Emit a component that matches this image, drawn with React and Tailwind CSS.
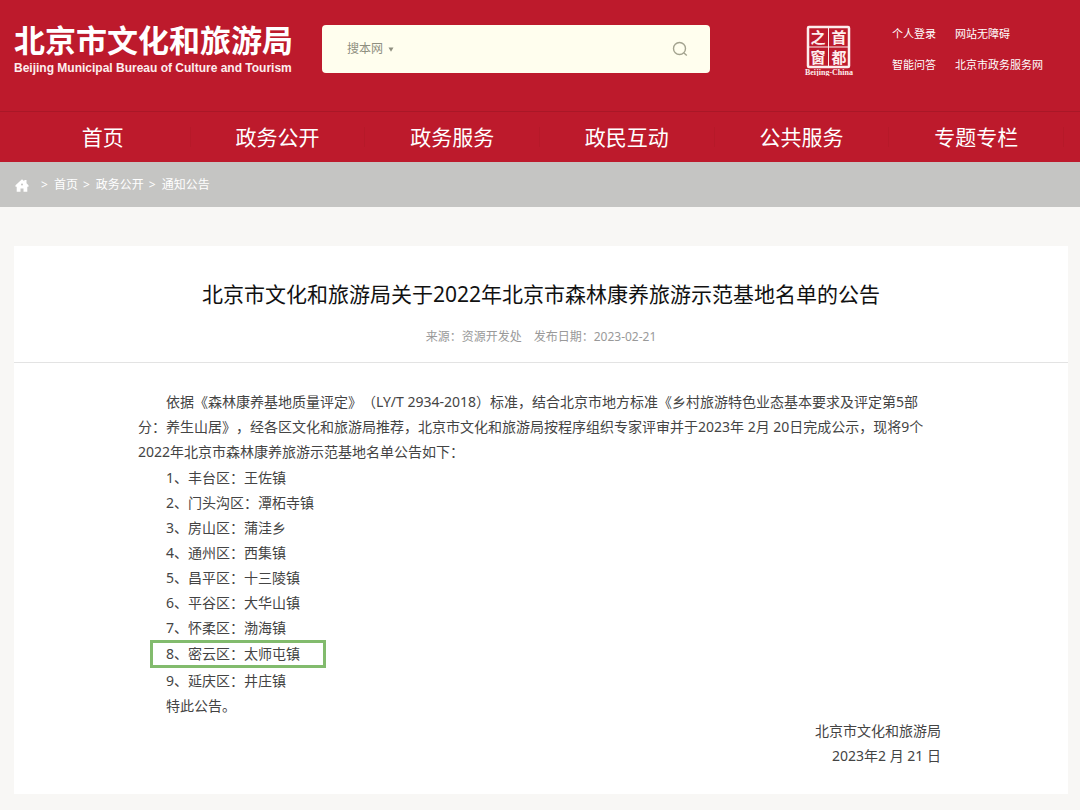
import React from 'react';

const navItems = ['首页', '政务公开', '政务服务', '政民互动', '公共服务', '专题专栏'];

const quickLinks = ['个人登录', '网站无障碍', '智能问答', '北京市政务服务网'];

const crumbs = ['首页', '政务公开', '通知公告'];

const bases = [
  { area: '丰台区', town: '王佐镇' },
  { area: '门头沟区', town: '潭柘寺镇' },
  { area: '房山区', town: '蒲洼乡' },
  { area: '通州区', town: '西集镇' },
  { area: '昌平区', town: '十三陵镇' },
  { area: '平谷区', town: '大华山镇' },
  { area: '怀柔区', town: '渤海镇' },
  { area: '密云区', town: '太师屯镇', marked: true },
  { area: '延庆区', town: '井庄镇' },
];

function CapitalWindow() {
  return (
    <a href="#" aria-label="首都之窗" className="block shrink-0">
      <svg width="50" height="52" viewBox="0 0 50 52" fill="#fdeeee">
        <rect x="4" y="3" width="41" height="40" rx="1" fill="none" stroke="#fdeeee" strokeWidth="2.5" />
        <path d="M24.5 3v40M4 23h41" stroke="#fdeeee" strokeWidth="1" />
        <g fontFamily="'Noto Sans CJK SC', sans-serif" fontWeight="700" fontSize="15" textAnchor="middle">
          <text x="14" y="19">之</text>
          <text x="35" y="19">首</text>
          <text x="14" y="39">窗</text>
          <text x="35" y="39">都</text>
        </g>
        <text x="25" y="51" textAnchor="middle" fontFamily="'Liberation Serif', serif" fontWeight="700" fontSize="8">Beijing-China</text>
      </svg>
    </a>
  );
}

function SearchBox() {
  return (
    <form className="mt-px flex h-12 w-[388px] items-center rounded bg-[#fffeee] pl-[25px] pr-5 text-[#8f8f80]" onSubmit={(e) => e.preventDefault()}>
      <div className="relative flex shrink-0 items-center">
        <select aria-label="搜索范围" className="appearance-none bg-transparent pr-4 text-xs outline-none">
          <option>搜本网</option>
        </select>
        <svg className="pointer-events-none absolute right-1.5" width="6" height="5" viewBox="0 0 6 5">
          <path d="M0.5 0.5h5L3 4.8z" fill="currentColor" />
        </svg>
      </div>
      <input type="text" aria-label="搜索" className="min-w-0 flex-1 bg-transparent text-xs outline-none" />
      <button type="submit" aria-label="搜索" className="p-0.5">
        <svg width="16" height="16" viewBox="0 0 16 16" fill="none" stroke="#a3a38f" strokeWidth="1.4">
          <circle cx="7.5" cy="7.5" r="6" />
          <path d="M12 12l2.8 2.6" />
        </svg>
      </button>
    </form>
  );
}

function Header() {
  return (
    <header className="bg-[#bd1a2c] text-white">
      <div className="flex h-[111px] items-start pl-3.5 pr-10 pt-6">
        <a href="#" className="block w-[308px] shrink-0 whitespace-nowrap">
          <span className="block text-[31px] font-bold leading-8">北京市文化和旅游局</span>
          <span className="block font-['Liberation_Sans'] text-xs font-bold leading-6 text-[#fdeeee]">Beijing Municipal Bureau of Culture and Tourism</span>
        </a>
        <SearchBox />
        <div className="ml-auto flex">
          <CapitalWindow />
          <div className="ml-[38px] grid grid-cols-[63px_85px] gap-y-2.5 whitespace-nowrap text-[11px] leading-5">
            {quickLinks.map((l) => <a key={l} href="#">{l}</a>)}
          </div>
        </div>
      </div>
      <nav className="border-t border-[#a91727] pl-4 pr-4">
        <ul className="grid h-[50px] grid-cols-6 items-center text-center text-[21px]">
          {navItems.map((n) => (
            <li key={n} className="border-r border-[#b61929] leading-5">
              <a href="#">{n}</a>
            </li>
          ))}
        </ul>
      </nav>
    </header>
  );
}

function Breadcrumb() {
  return (
    <nav className="flex h-[45px] items-center bg-[#c5c5c3] pl-[15px] pt-px text-xs text-white">
      <a href="#" aria-label="主页" className="mr-3">
        <svg width="14" height="13" viewBox="0 0 13 13" fill="currentColor">
          <path fillRule="evenodd" d="M6.5 0.2L8.8 2.2V1h2.2v3.2L13 6.2v1.5h-1.2v5H8V9.5H5v3.2H1.2v-5H0V6.2zM6.5 4.6a1 1 0 1 0 0 2a1 1 0 1 0 0-2z" />
        </svg>
      </a>
      {crumbs.map((c) => (
        <span key={c} className="flex">
          <span className="mr-1.5">&gt;</span>
          <a href="#" className="mr-[5px]">{c}</a>
        </span>
      ))}
    </nav>
  );
}

export default function App() {
  return (
    <div lang="zh-CN" className="min-h-screen bg-[#f8f7f5] pb-4 font-['Noto_Sans','Noto_Sans_CJK_SC',sans-serif] [text-spacing-trim:space-all]">
      <Header />
      <Breadcrumb />

      <main className="ml-3.5 mr-3 mt-[39px] bg-white pb-[26px] pt-8">
        <div className="border-b border-[#e3e3e3] pb-[15px] text-center">
          <h1 className="text-[21px] leading-8 text-[#111]">北京市文化和旅游局关于2022年北京市森林康养旅游示范基地名单的公告</h1>
          <p className="mt-[17px] flex justify-center gap-3 text-xs leading-5 text-[#999]">
            <span>来源：资源开发处</span>
            <span>发布日期：2023-02-21</span>
          </p>
        </div>

        <article className="pl-[124px] pr-[127px] pt-[26px] text-sm leading-[25px] text-[#444]">
          <p className="indent-7">
            依据《森林康养基地质量评定》（LY/T 2934-2018）标准，结合北京市地方标准《乡村旅游特色业态基本要求及评定第5部分：养生山居》，经各区文化和旅游局推荐，北京市文化和旅游局按程序组织专家评审并于2023年 2月 20日完成公示，现将9个2022年北京市森林康养旅游示范基地名单公告如下：
          </p>
          <ul className="mt-px pl-3">
            {bases.map((b, i) => (
              <li
                key={b.area}
                className={b.marked ? 'w-44 border-[3px] border-[#82bb6d] pl-[13px] leading-[22px]' : 'pl-4'}
              >
                {i + 1}、{b.area}：{b.town}
              </li>
            ))}
          </ul>
          <p className="indent-7">特此公告。</p>
          <div className="text-right">
            <p>北京市文化和旅游局</p>
            <p>2023年2 月 21 日</p>
          </div>
        </article>
      </main>
    </div>
  );
}
